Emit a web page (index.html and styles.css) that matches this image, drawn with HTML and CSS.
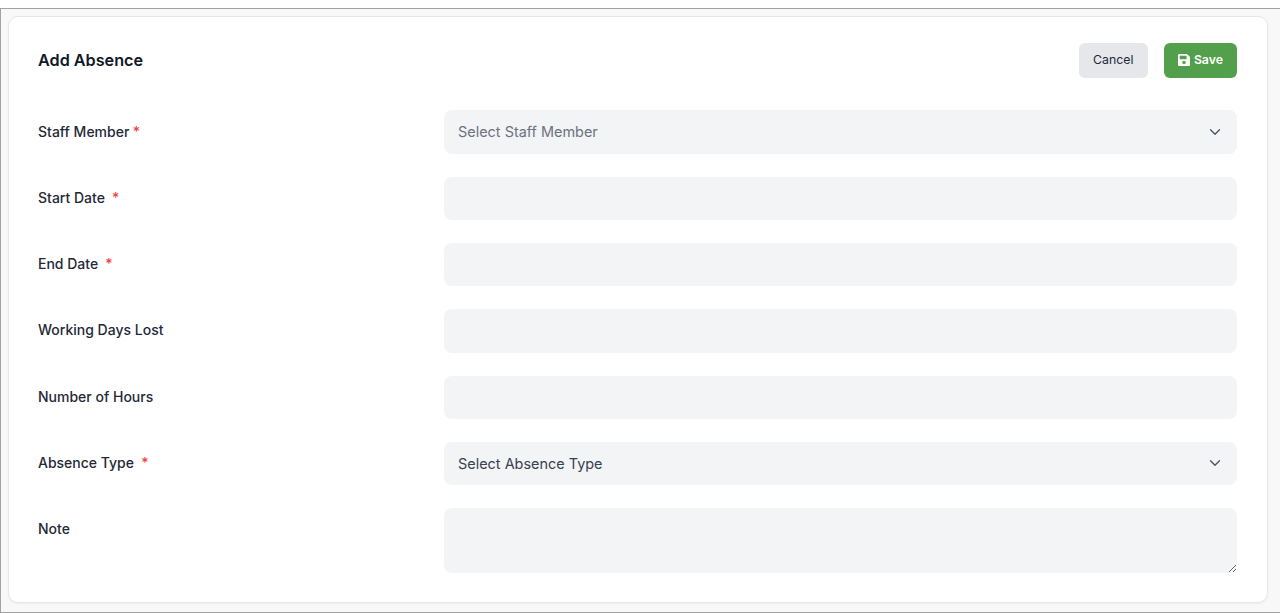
FILE: index.html
```html
<!DOCTYPE html>
<html lang="en">
<head>
<meta charset="utf-8">
<title>Add Absence</title>
<link rel="stylesheet" href="styles.css">
</head>
<body>
<div class="frame">
  <form class="card">
    <header class="head">
      <h1 class="title">Add Absence</h1>
      <div class="actions">
        <button type="button" class="btn btn-cancel">Cancel</button>
        <button type="button" class="btn btn-save">
          <svg class="save-icon" viewBox="0 0 448 512" aria-hidden="true"><path fill="currentColor" d="M433.9 129.9l-83.900-83.900A48 48 0 0 0 316.100 32H48C21.500 32 0 53.500 0 80v352c0 26.500 21.500 48 48 48h352c26.500 0 48-21.500 48-48V163.900a48 48 0 0 0-14.100-34zM224 416c-35.300 0-64-28.700-64-64 0-35.300 28.700-64 64-64s64 28.700 64 64c0 35.300-28.700 64-64 64zm96-304.500V212c0 6.600-5.400 12-12 12H76c-6.600 0-12-5.400-12-12V108c0-6.600 5.400-12 12-12h228.500c3.200 0 6.200 1.300 8.500 3.500l3.500 3.500c2.200 2.300 3.500 5.300 3.500 8.500z"/></svg>
          Save
        </button>
      </div>
    </header>
    <div class="rows">
      <label class="row"><span class="label">Staff Member <i class="req">*</i></span>
        <div class="field select placeholder">Select Staff Member
          <svg class="chev" viewBox="0 0 20 20" aria-hidden="true"><path d="M5 7.500l5 5 5-5" fill="none" stroke="currentColor" stroke-width="1.500" stroke-linecap="round" stroke-linejoin="round"/></svg>
        </div>
      </label>
      <label class="row"><span class="label">Start Date &nbsp;<i class="req">*</i></span><input class="field" type="text"></label>
      <label class="row"><span class="label">End Date &nbsp;<i class="req">*</i></span><input class="field" type="text"></label>
      <label class="row"><span class="label">Working Days Lost</span><input class="field" type="text"></label>
      <label class="row"><span class="label">Number of Hours</span><input class="field" type="text"></label>
      <label class="row"><span class="label">Absence Type &nbsp;<i class="req">*</i></span>
        <div class="field select">Select Absence Type
          <svg class="chev" viewBox="0 0 20 20" aria-hidden="true"><path d="M5 7.500l5 5 5-5" fill="none" stroke="currentColor" stroke-width="1.500" stroke-linecap="round" stroke-linejoin="round"/></svg>
        </div>
      </label>
      <label class="row"><span class="label">Note</span><textarea class="field area"></textarea></label>
    </div>
  </form>
</div>
</body>
</html>
```
FILE: styles.css
```css
* { box-sizing: border-box; }
html, body { margin: 0; height: 613px; overflow: hidden; background: #fff; }
body { padding-top: 8px; font-family: Inter, "Liberation Sans", sans-serif; color: #1f2937; }
.frame {
  height: 605px;
  border-top: 1px solid #a3a3a3;
  border-left: 1px solid #a3a3a3;
  border-bottom: 1px solid #a3a3a3;
  background: #f8f8f8;
  padding: 7px 12px 9px 7px;
}
.card {
  height: 587px;
  background: #fff;
  border: 1px solid #e5e7eb;
  border-radius: 10px;
  padding: 26px 30px 0 29px;
  box-shadow: 0 1px 2px rgba(0,0,0,.05);
}
.head { display: flex; justify-content: space-between; align-items: center; height: 35px; margin-bottom: 32.400px; }
.title { margin: -2px 0 0; font-size: 16.200px; line-height: 24px; font-weight: 600; color: #111827; }
.actions { display: flex; gap: 16px; }
.btn {
  height: 35px;
  border: 0;
  border-radius: 6px;
  font-family: inherit;
  font-size: 12.300px;
  line-height: 16px;
  font-weight: 400;
  display: flex;
  align-items: center;
}
.btn-cancel { background: #e5e7eb; color: #1f2937; padding: 0 14.500px 2px; }
.btn-save { background: #529f4c; color: #fff; font-weight: 600; gap: 4px; padding: 0 14px 2px; }
.save-icon { width: 12px; height: 14px; }
.rows { display: flex; flex-direction: column; gap: 23px; }
.row { display: grid; grid-template-columns: 406px 1fr; align-items: start; }
.label { font-size: 14px; line-height: 20px; font-weight: 450; padding-top: 11.150px; color: #1f2937; }
.req { font-style: normal; color: #ef4444; margin-left: -0.300px; }
.field {
  display: block;
  width: 100%;
  height: 43.300px;
  border: 0;
  border-radius: 8px;
  background: #f3f4f6;
  padding: 0 14px;
  font-family: inherit;
  font-size: 14.450px;
  color: #374151;
}
.select { display: flex; align-items: center; justify-content: space-between; padding-bottom: 0.600px; }
.placeholder { color: #6b7280; }
.chev { width: 18px; height: 18px; color: #4b5563; margin-right: -1px; }
.area { height: 65px; resize: vertical; }
```
